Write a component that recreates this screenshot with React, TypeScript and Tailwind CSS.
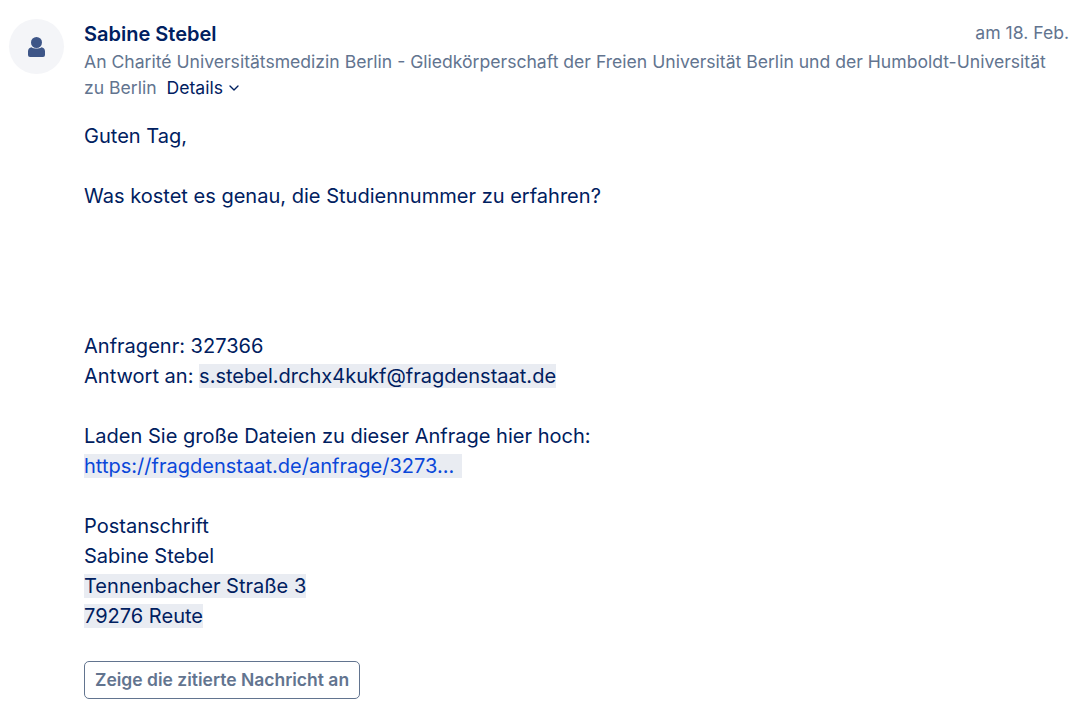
import { ChevronDown } from "lucide-react";

const App = () => {
  return (
    <div className="w-[1080px] h-[704px] overflow-hidden bg-white font-['Inter',sans-serif] text-[#002060]">
      <div className="flex pl-[9px] pr-[11px] pt-[19px]">
        <div className="w-[55px] h-[55px] shrink-0 rounded-full bg-[#f4f5f8] flex items-center justify-center">
          <svg width="17" height="20" viewBox="0 0 17 20" className="fill-[#3e5688]">
            <circle cx="8.5" cy="5.500" r="5.500" />
            <path d="M3.500 10.200c1.400 1 3.100 1.400 5 1.400s3.600-.4 5-1.400c2 .2 3.500 1.900 3.500 4V18a2 2 0 0 1-2 2H2a2 2 0 0 1-2-2v-3.800c0-2.100 1.500-3.800 3.500-4z" />
          </svg>
        </div>
        <div className="ml-5 flex-1 min-w-0">
          <div className="flex justify-between">
            <span className="text-[20px] leading-[30px] font-semibold">Sabine Stebel</span>
            <span className="text-[17.6px] leading-[27px] text-[#62748f]">am 18. Feb.</span>
          </div>
          <div className="text-[17.58px] leading-[26px] text-[#62748f] pr-2">
            An Charité Universitätsmedizin Berlin - Gliedkörperschaft der Freien Universität Berlin und der Humboldt-Universität zu Berlin
            <span className="ml-[10px] text-[#002060]">
              Details
              <ChevronDown size={16} strokeWidth={2} className="ml-[3px] inline-block align-[-2px]" />
            </span>
          </div>
          <div className="text-[20.05px] leading-[30px] mt-[20px]">
            <div>Guten Tag,</div>
            <div className="mt-[30px]">Was kostet es genau, die Studiennummer zu erfahren?</div>
            <div className="mt-[120px]">Anfragenr: 327366</div>
            <div>
              Antwort an: <span className="bg-[#e9ecf2]">s.stebel.drchx4kukf@fragdenstaat.de</span>
            </div>
            <div className="mt-[30px]">Laden Sie große Dateien zu dieser Anfrage hier hoch:</div>
            <div>
              <span className="bg-[#e9ecf2] text-[#0a47d9] pr-2">https://fragdenstaat.de/anfrage/3273...</span>
            </div>
            <div className="mt-[30px]">Postanschrift</div>
            <div>Sabine Stebel</div>
            <div>
              <span className="bg-[#e9ecf2]">Tennenbacher Straße 3</span>
            </div>
            <div>
              <span className="bg-[#e9ecf2]">79276 Reute</span>
            </div>
          </div>
          <button className="mt-[30px] h-[38px] px-[10px] rounded-[5px] border border-[#62748f] text-[#62748f] text-[17.5px] font-semibold">
            Zeige die zitierte Nachricht an
          </button>
        </div>
      </div>
    </div>
  );
};

export default App;
